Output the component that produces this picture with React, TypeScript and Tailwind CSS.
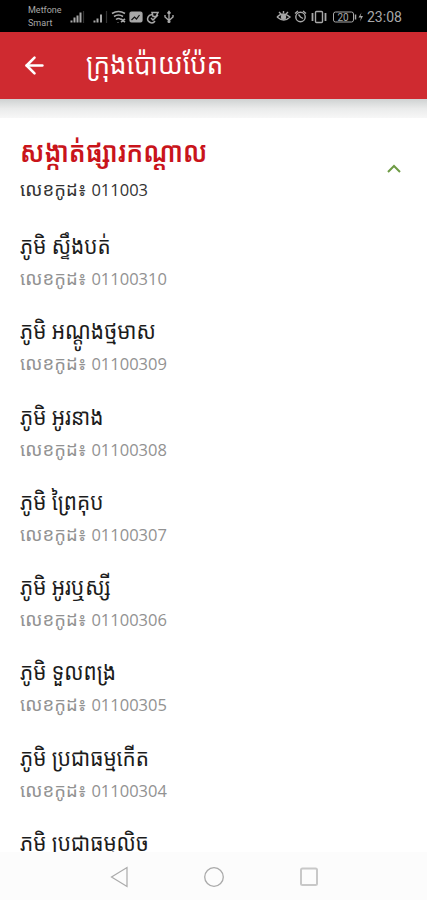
import { ArrowLeft } from "lucide-react";

const villages = [
  { name: "ភូមិ ស្ទឹងបត់", code: "01100310" },
  { name: "ភូមិ អណ្តូងថ្មមាស", code: "01100309" },
  { name: "ភូមិ អូរនាង", code: "01100308" },
  { name: "ភូមិ ព្រៃគុប", code: "01100307" },
  { name: "ភូមិ អូរឬស្សី", code: "01100306" },
  { name: "ភូមិ ទួលពង្រ", code: "01100305" },
  { name: "ភូមិ ប្រជាធម្មកើត", code: "01100304" },
  { name: "ភូមិ ប្រជាធម្មលិច", code: "01100303" },
];

const StatusBar = () => (
  <div className="h-8 shrink-0 bg-black text-[#a8a8a8] flex items-center font-['Roboto',sans-serif]">
    <div className="ml-[28px] w-[42px] text-[9px] leading-[13px] pt-0.5">
      <div>Metfone</div>
      <div>Smart</div>
    </div>
    {/* signal, wifi and notifications */}
    <svg className="w-[108px] h-8" viewBox="70 0 108 32" fill="none" stroke="currentColor" strokeWidth="1.2">
      <path d="M71.5 22.5v-2M74.5 22.5v-5M77.5 22.5v-7M80.5 22.5v-10" strokeWidth="2" />
      <path d="M83.5 11v12M106.5 11v12" stroke="#333" />
      <path d="M94.5 22.5v-2M97.5 22.5v-4M101 22.5v-8" strokeWidth="2" />
      <path d="M112 13.500q6.500-4 13 0M114 16.500q4.500-3 9 0M116 19.500q2.500-2 5 0M118 22v.5M121 19l4 3M125 19l-4 3" strokeWidth="1.600" />
      <rect x="130" y="12" width="12" height="10" rx="1.500" fill="currentColor" />
      <path d="M131.500 20l3-3 2 2 3-4" stroke="#111" />
      <path d="M152 12.500h6l-2 4h-3zM153 15a4 4 0 1 0 2 6M151 18l2 2 5-5" strokeWidth="1.500" />
      <path d="M169 12v10M167.500 13.500l1.500-2 1.500 2M165 15v2l4 3.500 4-3.500v-2" strokeWidth="1.400" />
      <circle cx="169" cy="21.500" r="1" fill="currentColor" />
    </svg>
    {/* eye comfort, alarm, vibrate, battery */}
    <svg className="ml-[98px] w-[89px] h-8" viewBox="276 0 89 32" fill="none" stroke="currentColor" strokeWidth="1.4">
      <path d="M277 17q6-6 13 0-6 6-13 0M279 12l2 2M283.500 11v2M288 12l-2 2" />
      <circle cx="283.500" cy="17" r="2" fill="currentColor" />
      <circle cx="300.500" cy="17" r="4.700" />
      <path d="M295 13.500l3-2.500M306 13.500l-3-2.500M298.500 14.500l2 2.500 2.500 1.500" />
      <rect x="315.500" y="11.500" width="7" height="11" rx="1" />
      <path d="M312.500 13v8M325.500 13v8" strokeWidth="1.800" />
      <rect x="333.500" y="12" width="20" height="10" rx="2" strokeWidth="1" />
      <path d="M355.500 14.500v5" strokeWidth="1.500" />
      <path d="M361.500 12.500l-3 5h2.500l-1 4 3-5.500h-2.500z" fill="currentColor" stroke="none" />
      <text x="337.500" y="20.500" fontSize="10" fill="currentColor" stroke="none">20</text>
    </svg>
    <span className="ml-[2px] text-[14px] leading-8 pt-px">23:08</span>
  </div>
);

const NavigationBar = () => (
  <div className="h-12 shrink-0 bg-[#fcfcfc] flex justify-center gap-[71px] pt-[13px] text-[#aaa]">
    <svg className="w-6 h-6" viewBox="0 0 24 24" fill="none" stroke="currentColor" strokeWidth="1.2">
      <path d="M4.500 12L20 2.500v19z" />
    </svg>
    <svg className="w-6 h-6" viewBox="0 0 24 24" fill="none" stroke="currentColor" strokeWidth="1.3">
      <circle cx="12" cy="12" r="9.300" />
    </svg>
    <svg className="w-6 h-6 text-[#c8c8c8]" viewBox="0 0 24 24" fill="none" stroke="currentColor" strokeWidth="2">
      <rect x="4" y="3.500" width="16" height="16.500" rx="1.500" />
    </svg>
  </div>
);

const CodeLine = ({ code, className }: { code: string; className: string }) => (
  <p className={`h-[30px] text-[18.5px] leading-[29px] whitespace-nowrap ${className}`}>
    លេខកូដ៖ <span className="text-[16.5px]">{code}</span>
  </p>
);

const App = () => {
  return (
    <div className="h-[900px] w-[427px] flex flex-col overflow-hidden bg-white font-['Open_Sans','Noto_Sans_Khmer','Khmer_OS',sans-serif]">
      <StatusBar />
      <header className="h-[67px] shrink-0 bg-[#cf2a30] text-white flex items-center">
        <ArrowLeft className="ml-[21px] w-[27px] h-[27px]" strokeWidth={2.3} />
        <h1 className="ml-[38px] -mt-1.5 text-[26px] leading-[40px] scale-y-[1.12] whitespace-nowrap">ក្រុងប៉ោយប៉ែត</h1>
      </header>
      <div className="h-[19px] shrink-0 bg-gradient-to-b from-[#cfd2d2] via-[#eaebeb] to-[#f7f7f7]" />
      <main className="flex-1 min-h-0 overflow-hidden px-5">
        <div className="flex justify-between">
          <div className="pt-[14px]">
            <h2 className="h-[42px] text-[25.5px] leading-[38px] font-semibold text-[#c9141b] scale-y-[1.12] whitespace-nowrap">
              សង្កាត់ផ្សារកណ្តាល
            </h2>
            <CodeLine code="011003" className="text-[#333]" />
          </div>
          <svg className="mt-[44px] mr-[5px] w-4 h-3.5" viewBox="0 0 16 14" fill="none" stroke="#6e9b45" strokeWidth="2">
            <path d="M2 10l6-6 6 6" />
          </svg>
        </div>
        {villages.map((village) => (
          <div key={village.code} className="h-[85.25px] pt-[25px]">
            <p className="h-[34px] text-[20.8px] leading-[32px] text-[#1c1c1c] scale-y-[1.1] whitespace-nowrap">
              {village.name}
            </p>
            <CodeLine code={village.code} className="text-[#929292]" />
          </div>
        ))}
      </main>
      <NavigationBar />
    </div>
  );
};

export default App;
